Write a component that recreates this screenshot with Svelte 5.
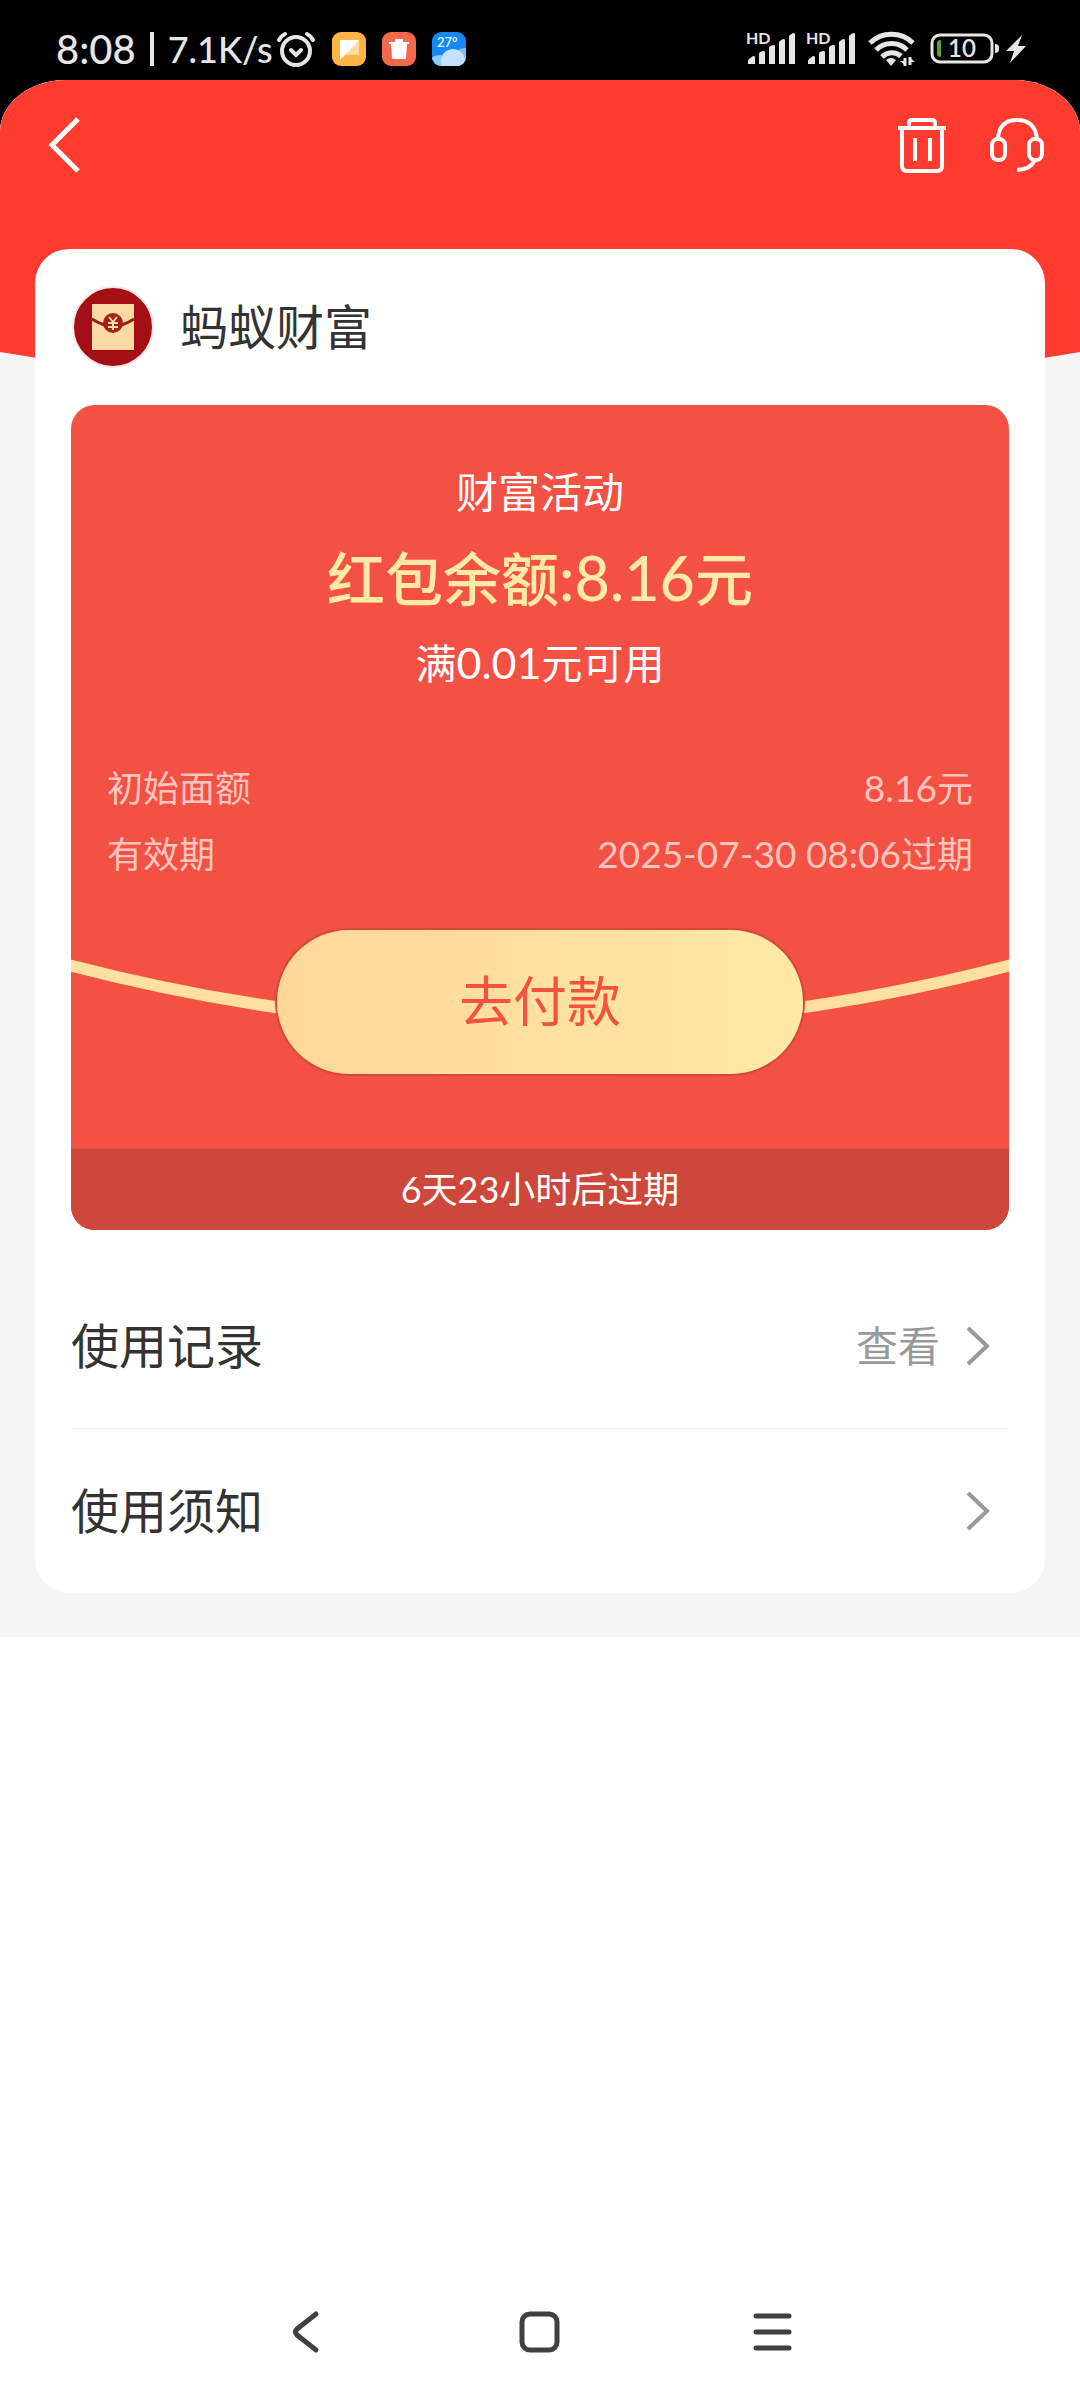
<script>
  const coupon = {
    title: '财富活动',
    amount: '8.16',
    threshold: '0.01',
    expires: '2025-07-30 08:06'
  };

  const rows = [
    { label: '使用记录', action: '查看' },
    { label: '使用须知', action: '' }
  ];

  const signals = [1, 2];
</script>

<div class="phone">
  <div class="status">
    <div class="status-left">
      <span>8:08</span>
      <span class="bar"></span>
      <span class="speed">7.1K/s</span>
      <svg class="alarm" viewBox="0 0 40 36" width="40" height="36" fill="none" stroke="#e6e6e6" stroke-width="4" stroke-linecap="round">
        <circle cx="20" cy="20" r="14" />
        <path d="M15 19l5 5 5-5" />
        <path d="M3 9Q5 5 9 3M37 9Q35 5 31 3" />
      </svg>
      <svg class="app" viewBox="0 0 34 34" width="34" height="34">
        <rect width="34" height="34" rx="9" fill="#ffb444" />
        <path d="M8 8h19v15H13l-5 5z" fill="#ffdca6" />
        <path d="M8 8h19L8 28z" fill="#fff" />
      </svg>
      <svg class="app" viewBox="0 0 34 34" width="34" height="34">
        <rect width="34" height="34" rx="9" fill="#f4694e" />
        <path d="M13 7h8v3h6v2h-2l-1 14q0 1-1 1H11q-1 0-1-1L9 12H7v-2h6z" fill="#fff" />
      </svg>
      <svg class="app" viewBox="0 0 34 34" width="34" height="34">
        <defs>
          <clipPath id="weather"><rect width="34" height="34" rx="9" /></clipPath>
        </defs>
        <g clip-path="url(#weather)">
          <rect width="34" height="34" fill="#1689f8" />
          <circle cx="33" cy="28" r="12" fill="#7cc0fb" />
          <circle cx="7" cy="34" r="11" fill="#8fcafc" />
          <circle cx="21" cy="29" r="12" fill="#c4e2fd" />
        </g>
        <text x="5" y="15" font-size="13" fill="#fff">27°</text>
      </svg>
    </div>
    <div class="status-right">
      {#each signals as s (s)}
        <svg class="signal" viewBox="0 0 50 34" width="50" height="34" fill="#e6e6e6">
          <text x="0" y="12" font-size="16" font-weight="700">HD</text>
          <path d="M2 32v-3q0-1 1-2l4-3q2 0 2 1v7zM13 32V22q0-1 1-2l3-1q2 0 2 1v12zM23 32V16q0-1 1-2l3-1q2 0 2 1v18zM33 32V11q0-2 1-2l3-2q2 0 2 1v24zM43 32V5q0-2 1-2l3-2q2 0 2 1v30z" />
        </svg>
      {/each}
      <svg class="wifi" viewBox="0 0 48 36" width="48" height="36" fill="none" stroke="#e6e6e6" stroke-width="5">
        <path d="M2 12A31 31 0 0 1 45 12M8 19A22 22 0 0 1 39 19M14 26A14 14 0 0 1 33 25" />
        <path d="M18 29q5-4 10 0L23 35z" fill="#e6e6e6" stroke="none" />
        <path d="M37 27v8M42 34v-8" stroke-width="3" />
        <path d="M38 35l-6-5h6zM41 26l6 5h-6z" fill="#e6e6e6" stroke="none" />
      </svg>
      <svg class="battery" viewBox="0 0 70 32" width="70" height="32">
        <rect x="2" y="2" width="60" height="27" rx="8" fill="none" stroke="#e6e6e6" stroke-width="3" />
        <path d="M7 10q0-3 4-3v17q-4 0-4-3z" fill="#55a630" />
        <path d="M65 11q4 0 4 4v1q0 4-4 4z" fill="#e6e6e6" />
        <text x="32" y="24" font-size="24" font-weight="600" fill="#e6e6e6" text-anchor="middle">10</text>
      </svg>
      <svg class="bolt" viewBox="0 0 20 30" width="20" height="30">
        <path d="M16 1L0 17h8L4 29 20 12h-8z" fill="#e6e6e6" />
      </svg>
    </div>
  </div>

  <main>
    <section class="hero">
      <svg class="backdrop" viewBox="0 0 1080 320" preserveAspectRatio="none" aria-hidden="true">
        <path d="M0 0H1080V272Q540 364 0 272Z" fill="#ff3b2f" />
      </svg>

      <header class="toolbar">
        <button aria-label="返回">
          <svg viewBox="0 0 54 54" width="54" height="54" fill="none" stroke="#fff" stroke-width="5">
            <path d="M30 1L4 27l26 26" />
          </svg>
        </button>
        <div class="tools">
          <button aria-label="删除">
            <svg viewBox="0 0 54 56" width="54" height="56" fill="none" stroke="#fff" stroke-width="4">
              <path d="M3 11h48M14 11V6q0-3 3-3h20q3 0 3 3v5" />
              <path d="M7 11v38q0 5 5 5h30q5 0 5-5V11" />
              <path d="M20 21v23M35 21v23" />
            </svg>
          </button>
          <button aria-label="客服">
            <svg viewBox="0 0 54 56" width="54" height="56" fill="none" stroke="#fff" stroke-width="4">
              <path d="M8 22Q9 3 27 3t20 19" />
              <rect x="2" y="22" width="13" height="21" rx="6" />
              <rect x="39" y="22" width="13" height="21" rx="6" />
              <path d="M45 43Q40 53 27 53" />
            </svg>
          </button>
        </div>
      </header>

      <article class="card">
        <div class="brand">
          <svg viewBox="0 0 82 82" width="82" height="82" aria-hidden="true">
            <circle cx="41" cy="41" r="40" fill="#a40f16" stroke="#f8e6e8" stroke-width="2" />
            <rect x="20" y="18" width="42" height="46" fill="#fbd9a3" />
            <path d="M20 33q21 14 42 0" fill="none" stroke="#93211a" stroke-width="3" />
            <circle cx="41" cy="37" r="10" fill="#a3201b" />
            <path d="M37 31l4 5 4-5M41 36v8M36 37h10M36 41h10" fill="none" stroke="#fbd9a3" stroke-width="2" />
          </svg>
          <h1>蚂蚁财富</h1>
        </div>

        <div class="coupon">
          <p class="title">{coupon.title}</p>
          <p class="amount">红包余额<span class="num">:{coupon.amount}</span>元</p>
          <p class="threshold">满<span class="num">{coupon.threshold}</span>元可用</p>

          <dl>
            <div>
              <dt>初始面额</dt>
              <dd><span class="num">{coupon.amount}</span>元</dd>
            </div>
            <div>
              <dt>有效期</dt>
              <dd><span class="num">{coupon.expires}</span>过期</dd>
            </div>
          </dl>

          <div class="pay">
            <svg class="ribbon" viewBox="0 0 938 144" preserveAspectRatio="none" aria-hidden="true">
              <path d="M-10 33Q469 160 948 33" fill="none" stroke="#ffdfa2" stroke-width="12" />
            </svg>
            <button>去付款</button>
          </div>

          <p class="countdown">6天23小时后过期</p>
        </div>

        <nav class="links">
          {#each rows as row}
            <a href="#{row.label}">
              <span class="label">{row.label}</span>
              <span class="action">{row.action}</span>
              <svg viewBox="0 0 24 38" width="24" height="38" fill="none" stroke="#999" stroke-width="4">
                <path d="M2 1l19 18L2 37" />
              </svg>
            </a>
          {/each}
        </nav>
      </article>
    </section>

    <div class="system-nav">
      <button aria-label="后退">
        <svg viewBox="0 0 42 42" width="42" height="42" fill="none" stroke="#404040" stroke-width="5" stroke-linecap="round" stroke-linejoin="round">
          <path d="M30 3L11 18q-3 3 0 6l19 15" />
        </svg>
      </button>
      <button aria-label="主页">
        <svg viewBox="0 0 42 42" width="42" height="42" fill="none" stroke="#404040" stroke-width="5">
          <rect x="3" y="3" width="35" height="36" rx="8" />
        </svg>
      </button>
      <button aria-label="菜单">
        <svg viewBox="0 0 42 42" width="42" height="42" fill="none" stroke="#404040" stroke-width="5" stroke-linecap="round">
          <path d="M4 5h33M4 21h33M4 37h33" />
        </svg>
      </button>
    </div>
  </main>
</div>

<style>
  :global(body) {
    margin: 0;
  }

  .phone {
    display: flex;
    flex-direction: column;
    min-height: 100vh;
    background: #000;
    color: #333;
    font-family: Lato, 'Noto Sans CJK SC', sans-serif;
  }

  p,
  h1,
  dl,
  dd {
    margin: 0;
    font-weight: 400;
  }

  svg {
    display: block;
    flex: none;
    overflow: visible;
  }

  button {
    padding: 0;
    border: 0;
    background: none;
    font-family: inherit;
    cursor: pointer;
  }

  /* status bar */
  .status {
    display: flex;
    justify-content: space-between;
    align-items: center;
    box-sizing: border-box;
    height: 80px;
    padding: 18px 54px 0 56px;
    color: #e6e6e6;
    font-size: 40px;
    font-weight: 500;
  }

  .status-left,
  .status-right {
    display: flex;
    align-items: center;
  }

  .bar {
    width: 4px;
    height: 34px;
    margin: 0 14px;
    background: #e6e6e6;
  }

  .speed {
    font-size: 36px;
  }

  .alarm {
    margin-left: 3px;
  }

  .app {
    margin-left: 16px;
  }

  .signal {
    margin-right: 10px;
  }

  .wifi {
    margin: 0 14px 0 2px;
  }

  .bolt {
    margin-left: 6px;
  }

  /* page */
  main {
    display: flex;
    flex: 1;
    flex-direction: column;
    background: #fff;
    border-radius: 66px 66px 0 0 / 52px 52px 0 0;
    overflow: hidden;
  }

  .hero {
    position: relative;
    padding: 0 35px 44px;
    background: #f5f5f5;
  }

  .backdrop {
    position: absolute;
    top: 0;
    left: 0;
    width: 100%;
    height: 320px;
  }

  .toolbar {
    position: relative;
    display: flex;
    justify-content: space-between;
    align-items: center;
    height: 130px;
    margin-bottom: 39px;
    padding: 0 1px 0 13px;
  }

  .tools {
    display: flex;
    gap: 41px;
  }

  .card {
    position: relative;
    padding: 0 36px;
    background: #fff;
    border-radius: 34px;
  }

  .brand {
    display: flex;
    align-items: center;
    gap: 26px;
    height: 156px;
    padding-left: 1px;
  }

  h1 {
    font-size: 48px;
    line-height: 48px;
  }

  /* coupon */
  .coupon {
    padding-top: 54px;
    background: #f25144;
    border-radius: 24px;
    color: #fff;
    text-align: center;
    overflow: hidden;
  }

  .title {
    font-size: 42px;
    line-height: 66px;
  }

  .amount {
    color: #ffe9a6;
    font-size: 58px;
    font-weight: 500;
    line-height: 108px;
  }

  .num {
    line-height: 1;
  }

  .amount .num {
    font-size: 61px;
  }

  .threshold {
    font-size: 41px;
    line-height: 62px;
  }

  .threshold .num {
    font-size: 43px;
  }

  dl {
    margin-top: 60px;
    padding: 0 36px;
    color: #ffc5bc;
    font-size: 36px;
    line-height: 66px;
  }

  dl div {
    display: flex;
    justify-content: space-between;
  }

  dl .num {
    font-size: 37px;
  }

  .pay {
    position: relative;
    display: flex;
    justify-content: center;
    padding: 43px 0 75px;
  }

  .ribbon {
    position: absolute;
    top: 43px;
    left: 0;
    width: 100%;
    height: 144px;
  }

  .pay button {
    position: relative;
    width: 56%;
    height: 144px;
    border-radius: 72px;
    background: linear-gradient(90deg, #ffd79a, #ffe9a6);
    box-shadow: 0 0 1px 2px #d2483a;
    color: #f25144;
    font-size: 54px;
    line-height: 54px;
  }

  .countdown {
    background: #cd483b;
    font-size: 36px;
    line-height: 81px;
  }

  /* links */
  .links {
    padding-top: 34px;
  }

  .links a {
    display: flex;
    align-items: center;
    padding: 47px 19px 47px 0;
    color: inherit;
    font-size: 48px;
    line-height: 70px;
    text-decoration: none;
  }

  .links a + a {
    border-top: 1px solid #eee;
  }

  .label {
    flex: 1;
  }

  .action {
    margin-right: 26px;
    color: #999;
    font-size: 42px;
  }

  .system-nav {
    display: flex;
    justify-content: center;
    gap: 137px;
    height: 136px;
    margin-top: auto;
  }

  .system-nav button {
    display: flex;
    align-items: center;
    justify-content: center;
    width: 96px;
  }
</style>
